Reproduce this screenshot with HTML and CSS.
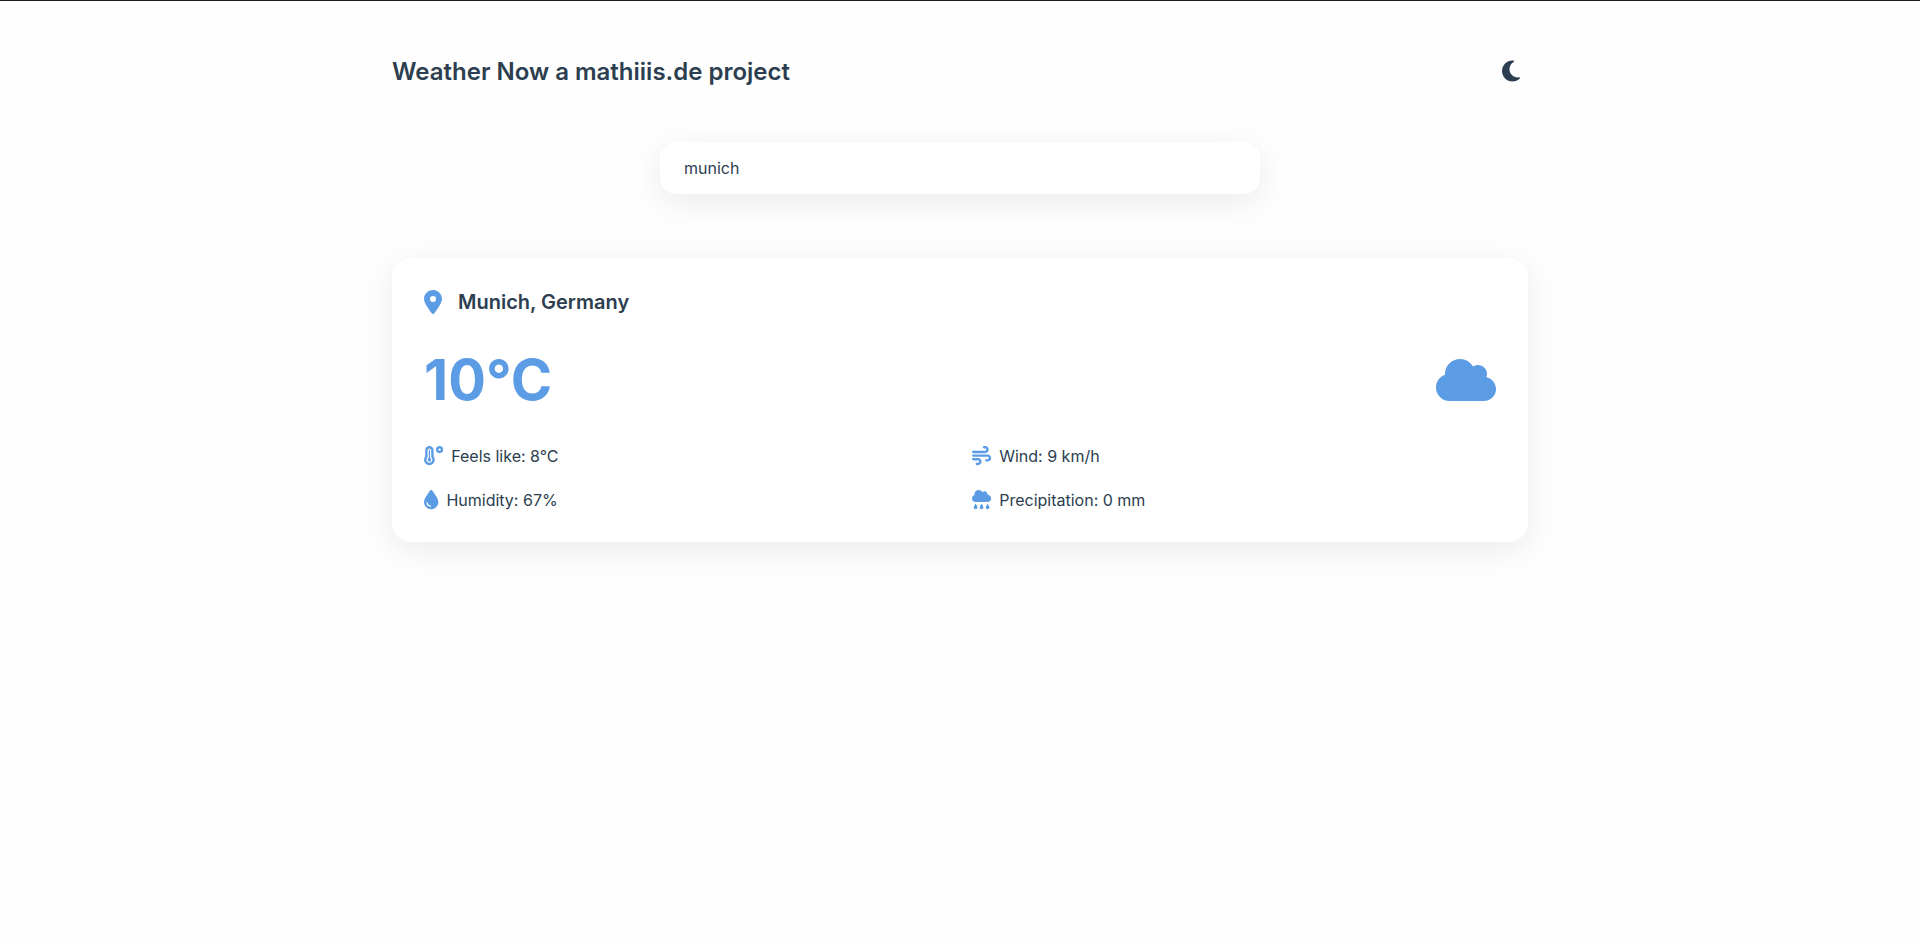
FILE: index.html
```html
<!DOCTYPE html>
<html lang="en">
<head>
<meta charset="utf-8">
<title>Weather Now</title>
<link rel="stylesheet" href="styles.css">
</head>
<body>
<div class="container">
  <header class="header">
    <h1 class="title">Weather Now a mathiiis.de project</h1>
    <button class="theme-toggle" aria-label="Toggle theme">
      <svg class="icon" viewBox="0 0 384 512"><path d="M223.500 32C100 32 0 132.300 0 256S100 480 223.500 480c60.600 0 115.500-24.200 155.800-63.400c5-4.900 6.300-12.500 3.100-18.700s-10.100-9.700-17-8.500c-9.800 1.700-19.800 2.600-30.100 2.600c-96.900 0-175.500-78.800-175.500-176c0-65.800 36-123.100 89.300-153.300c6.100-3.500 9.200-10.500 7.700-17.300s-7.300-11.900-14.300-12.500c-6.300-.5-12.600-.8-19-.8z"/></svg>
    </button>
  </header>
  <div class="search"><input class="search-input" type="text" value="munich"></div>
  <main class="card">
    <div class="location">
      <svg class="icon" viewBox="0 0 384 512"><path d="M215.700 499.200C267 435 384 279.400 384 192C384 86 298 0 192 0S0 86 0 192c0 87.400 117 243 168.300 307.200c12.300 15.300 35.100 15.300 47.400 0zM192 128a64 64 0 1 1 0 128 64 64 0 1 1 0-128z"/></svg>
      <h2 class="city">Munich, Germany</h2>
    </div>
    <div class="current">
      <div class="temperature">10°C</div>
      <svg class="icon icon-condition" viewBox="0 0 640 512"><path d="M0 336c0 79.500 64.500 144 144 144H512c70.700 0 128-57.300 128-128c0-61.900-44-113.600-102.400-125.400c4.100-10.700 6.400-22.400 6.400-34.600c0-53-43-96-96-96c-19.700 0-38.100 6-53.300 16.200C367 64.200 315.300 32 256 32C167.600 32 96 103.600 96 192c0 2.700 .1 5.400 .2 8.100C40.200 219.800 0 273.200 0 336z"/></svg>
    </div>
    <div class="details">
      <div class="detail">
        <svg class="icon" viewBox="0 0 512 512"><path d="M416 64a32 32 0 1 1 0 64 32 32 0 1 1 0-64zm0 128A96 96 0 1 0 416 0a96 96 0 1 0 0 192zM96 112c0-26.500 21.500-48 48-48s48 21.500 48 48V276.500c0 17.300 7.100 31.900 15.300 42.500C217.800 332.600 224 349.600 224 368c0 44.200-35.800 80-80 80s-80-35.800-80-80c0-18.400 6.200-35.400 16.700-49c8.200-10.600 15.300-25.200 15.300-42.500V112zM144 0C82.100 0 32 50.200 32 112V276.500c0 .1-.1 .3-.2 .6c-.2 .6-.8 1.600-1.700 2.800C11.200 304.200 0 334.800 0 368c0 79.500 64.500 144 144 144s144-64.500 144-144c0-33.200-11.200-63.800-30.100-88.100c-.9-1.200-1.500-2.200-1.700-2.800c-.1-.3-.2-.5-.2-.6V112C256 50.200 205.900 0 144 0zm0 416c26.500 0 48-21.500 48-48c0-20.900-13.400-38.700-32-45.300V112c0-8.800-7.200-16-16-16s-16 7.200-16 16V322.700c-18.600 6.600-32 24.400-32 45.300c0 26.500 21.500 48 48 48z"/></svg>
        <span>Feels like: 8°C</span>
      </div>
      <div class="detail">
        <svg class="icon" viewBox="0 0 512 512"><path d="M288 32c0 17.700 14.300 32 32 32h32c17.700 0 32 14.300 32 32s-14.300 32-32 32H32c-17.700 0-32 14.300-32 32s14.300 32 32 32H352c53 0 96-43 96-96s-43-96-96-96H320c-17.700 0-32 14.300-32 32zm64 352c0 17.700 14.300 32 32 32h32c53 0 96-43 96-96s-43-96-96-96H32c-17.700 0-32 14.300-32 32s14.300 32 32 32H416c17.700 0 32 14.300 32 32s-14.300 32-32 32H384c-17.700 0-32 14.300-32 32zM128 512h32c53 0 96-43 96-96s-43-96-96-96H32c-17.700 0-32 14.300-32 32s14.300 32 32 32H160c17.700 0 32 14.300 32 32s-14.300 32-32 32H128c-17.700 0-32 14.300-32 32s14.300 32 32 32z"/></svg>
        <span>Wind: 9 km/h</span>
      </div>
      <div class="detail">
        <svg class="icon" viewBox="0 0 384 512"><path d="M192 512C86 512 0 426 0 320C0 228.800 130.200 57.700 166.600 11.700C172.600 4.200 181.500 0 191.100 0h1.800c9.600 0 18.500 4.200 24.500 11.700C253.800 57.700 384 228.800 384 320c0 106-86 192-192 192zM96 336c0-8.800-7.200-16-16-16s-16 7.200-16 16c0 61.900 50.100 112 112 112c8.800 0 16-7.200 16-16s-7.200-16-16-16c-44.200 0-80-35.800-80-80z"/></svg>
        <span>Humidity: 67%</span>
      </div>
      <div class="detail">
        <svg class="icon" viewBox="0 0 512 512"><path d="M96 320c-53 0-96-43-96-96c0-42.500 27.600-78.600 65.900-91.200C64.700 126.100 64 119.100 64 112C64 50.100 114.100 0 176 0c43.100 0 80.500 24.300 99.200 60c14.700-17.100 36.500-28 60.800-28c44.200 0 80 35.800 80 80c0 5.500-.6 10.800-1.600 16c.5 0 1.100 0 1.600 0c53 0 96 43 96 96s-43 96-96 96H96zm-6.800 52c1.300-2.500 3.900-4 6.800-4s5.400 1.500 6.800 4l35.100 64.600c4.100 7.500 6.200 15.800 6.200 24.300v3c0 26.500-21.500 48-48 48s-48-21.500-48-48v-3c0-8.500 2.100-16.900 6.200-24.300L89.200 372zm160 0c1.300-2.500 3.900-4 6.800-4s5.400 1.500 6.800 4l35.100 64.600c4.100 7.500 6.200 15.800 6.200 24.300v3c0 26.500-21.500 48-48 48s-48-21.500-48-48v-3c0-8.500 2.100-16.900 6.200-24.300L249.200 372zm124.900 64.600L409.200 372c1.300-2.500 3.900-4 6.800-4s5.400 1.500 6.800 4l35.100 64.600c4.100 7.500 6.200 15.800 6.200 24.300v3c0 26.500-21.500 48-48 48s-48-21.500-48-48v-3c0-8.500 2.100-16.900 6.200-24.300z"/></svg>
        <span>Precipitation: 0 mm</span>
      </div>
    </div>
  </main>
</div>
</body>
</html>
```

FILE: styles.css
```css
* {
  box-sizing: border-box;
  margin: 0;
  padding: 0;
}

body {
  min-height: 100vh;
  border-top: 1px solid #1c1b1f;
  background: #fefefe;
  color: #2c3e50;
  font-family: Inter, "Liberation Sans", sans-serif;
}

.container {
  max-width: 1200px;
  margin: 0 auto;
  padding: 49px 32px 32px;
}

.header {
  display: flex;
  justify-content: space-between;
  align-items: center;
  height: 42px;
  margin-bottom: 50px;
}

.title {
  font-size: 24px;
  font-weight: 600;
}

.icon {
  display: block;
  height: 1em;
  fill: currentColor;
  overflow: visible;
}

.theme-toggle {
  padding: 8px;
  border: 0;
  background: none;
  color: inherit;
  font-size: 24px;
}

.search {
  max-width: 600px;
  margin: 0 auto 64px;
}

.search-input {
  display: block;
  width: 100%;
  height: 52px;
  padding: 16px 24px;
  border: 0;
  border-radius: 16px;
  outline: 0;
  background: #fff;
  box-shadow: 0 8px 32px rgba(0, 0, 0, 0.08);
  color: inherit;
  font: inherit;
}

.card {
  padding: 32px;
  border-radius: 20px;
  background: #fff;
  box-shadow: 0 8px 32px rgba(0, 0, 0, 0.08);
}

.location {
  display: flex;
  align-items: center;
  gap: 16px;
  height: 24px;
  margin-bottom: 32px;
}

.location .icon {
  color: #5c9ce5;
  font-size: 24px;
}

.city {
  font-size: 20px;
  font-weight: 600;
}

.current {
  display: flex;
  justify-content: space-between;
  align-items: center;
  height: 68px;
  margin-bottom: 32px;
  color: #5c9ce5;
}

.temperature {
  font-size: 56px;
  font-weight: 700;
}

.icon-condition {
  font-size: 48px;
}

.details {
  display: grid;
  grid-template-columns: 1fr 1fr;
  grid-auto-rows: 20px;
  gap: 24px;
}

.detail {
  display: flex;
  align-items: center;
  gap: 8px;
}

.detail .icon {
  color: #5c9ce5;
  font-size: 19.2px;
}
```
